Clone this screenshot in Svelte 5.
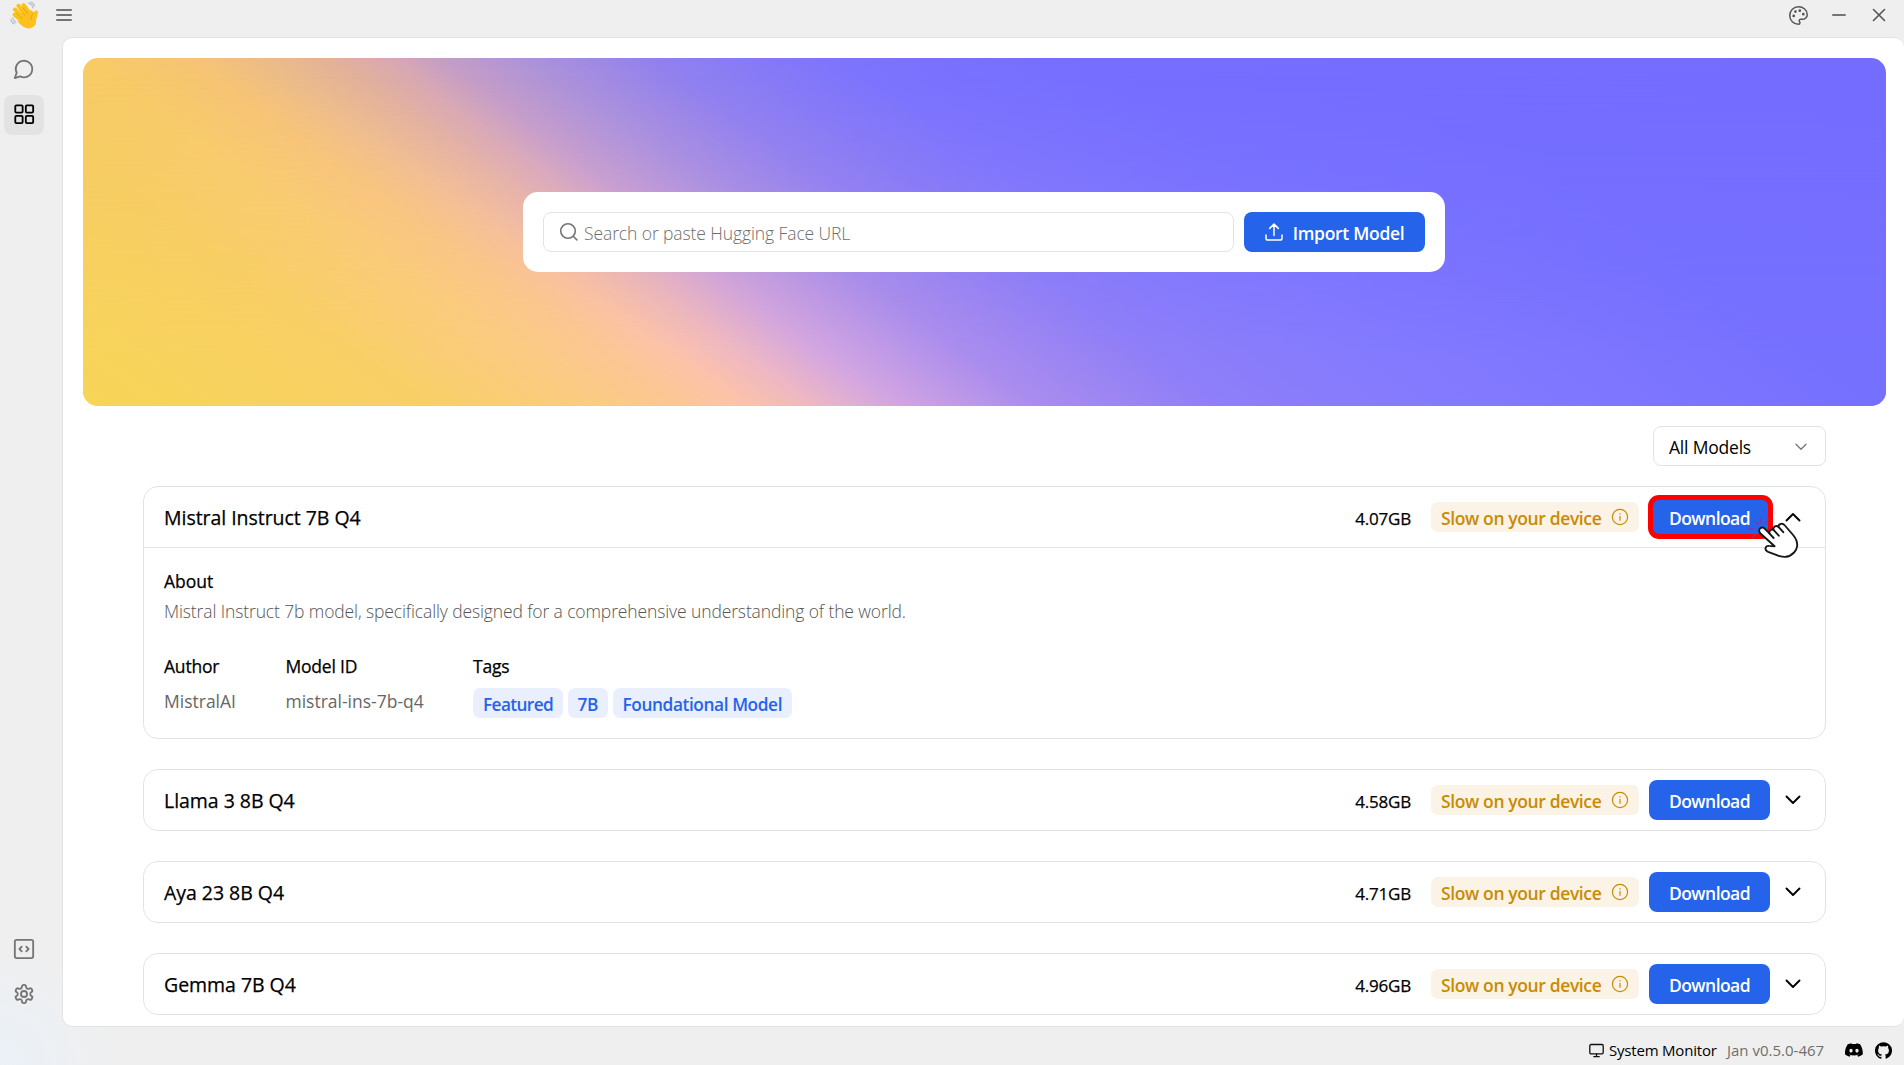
<script>
  const models = [
    { name: 'Mistral Instruct 7B Q4', size: '4.07GB', open: true },
    { name: 'Llama 3 8B Q4', size: '4.58GB' },
    { name: 'Aya 23 8B Q4', size: '4.71GB' },
    { name: 'Gemma 7B Q4', size: '4.96GB' }
  ];
  const tags = ['Featured', '7B', 'Foundational Model'];
</script>

<div class="app">
  <header class="titlebar">
    <svg class="logo" viewBox="0 0 28 28">
      <g fill="none" stroke="#b4c0cc" stroke-width="1.3" stroke-linecap="round">
        <path d="M18.5 2.2q3.800.6 4.500 4.600M20.800 1q3.200 1 3.600 3.800M1 18.500q.5 3.500 3.300 4.200M2.800 17q.5 3 3 4.200" />
      </g>
      <g stroke="#fcc21b" stroke-width="4" stroke-linecap="round">
        <path d="M4.500 13.500L14 22M5 8.500L16 19M8.500 4.800L18 15M13.500 4L20 13M26 11.500L24 19" />
      </g>
      <path fill="#fcc21b" d="M12 12l9-3 3.500 3 1.500 3v6c0 5-6 7.500-10 6-3-1-6-4-8-6z" />
      <path d="M6.500 12.500l5.500 5M9.500 8.500l5.500 6M13 6.500l5 6.500M23.200 12.500q-3 2.500-2.200 6" fill="none" stroke="#e59a12" stroke-width=".8" stroke-linecap="round" />
    </svg>
    <svg class="burger" viewBox="0 0 16 14" stroke="#757575" stroke-width="2" stroke-linecap="round"><path d="M1 2h14M1 7h14M1 12h14" /></svg>
    <span class="grow"></span>
    <svg class="palette line" viewBox="0 0 24 24">
      <circle cx="13.500" cy="6.500" r=".7" fill="currentColor" /><circle cx="17.500" cy="10.500" r=".7" fill="currentColor" />
      <circle cx="8.500" cy="7.500" r=".7" fill="currentColor" /><circle cx="6.500" cy="12.500" r=".7" fill="currentColor" />
      <path d="M12 2C6.500 2 2 6.500 2 12s4.500 10 10 10c.926 0 1.648-.746 1.648-1.688 0-.437-.18-.835-.437-1.125-.29-.289-.438-.652-.438-1.125a1.640 1.640 0 0 1 1.668-1.668h1.996c3.051 0 5.555-2.503 5.555-5.554C21.965 6.012 17.461 2 12 2z" />
    </svg>
    <svg class="min" viewBox="0 0 14 14" stroke="#757575" stroke-width="2" stroke-linecap="round"><path d="M1 7h12" /></svg>
    <svg class="close" viewBox="0 0 14 14" stroke="#555" stroke-width="1.600" stroke-linecap="round"><path d="M1.500 1.500l11 11M12.500 1.500l-11 11" /></svg>
  </header>

  <div class="body">
    <nav class="side">
      <span class="tile"><svg class="line" viewBox="0 0 24 24"><path d="M7.900 20A9 9 0 1 0 4 16.100L2 22Z" /></svg></span>
      <span class="tile active"><svg class="line" viewBox="0 0 24 24"><rect x="2.500" y="2.500" width="8" height="8" rx="1.200" /><rect x="14" y="2.500" width="8" height="8" rx="1.200" /><rect x="2.500" y="14" width="8" height="8" rx="1.200" /><rect x="14" y="14" width="8" height="8" rx="1.200" /></svg></span>
      <span class="grow"></span>
      <span class="tile low"><svg class="line" viewBox="0 0 24 24"><rect x="2" y="2" width="20" height="20" rx="2" /><path d="M9.500 9.500L7 12l2.500 2.500M14.500 9.500L17 12l-2.500 2.500" /></svg></span>
      <span class="tile low"><svg class="line" viewBox="0 0 24 24"><path d="M12.220 2h-.44a2 2 0 0 0-2 2v.18a2 2 0 0 1-1 1.730l-.43.25a2 2 0 0 1-2 0l-.15-.08a2 2 0 0 0-2.730.73l-.22.38a2 2 0 0 0 .73 2.730l.15.1a2 2 0 0 1 1 1.720v.51a2 2 0 0 1-1 1.740l-.15.09a2 2 0 0 0-.73 2.730l.22.38a2 2 0 0 0 2.730.73l.15-.08a2 2 0 0 1 2 0l.43.25a2 2 0 0 1 1 1.730V20a2 2 0 0 0 2 2h.44a2 2 0 0 0 2-2v-.18a2 2 0 0 1 1-1.730l.43-.25a2 2 0 0 1 2 0l.15.08a2 2 0 0 0 2.730-.73l.22-.39a2 2 0 0 0-.73-2.730l-.15-.08a2 2 0 0 1-1-1.740v-.5a2 2 0 0 1 1-1.740l.15-.09a2 2 0 0 0 .73-2.730l-.22-.38a2 2 0 0 0-2.730-.73l-.15.08a2 2 0 0 1-2 0l-.43-.25a2 2 0 0 1-1-1.730V4a2 2 0 0 0-2-2z" /><circle cx="12" cy="12" r="3.300" /></svg></span>
    </nav>

    <main class="panel">
      <section class="hero">
        <svg class="wash" viewBox="0 0 1803 348" preserveAspectRatio="none">
          <defs>
            <linearGradient id="top" gradientUnits="userSpaceOnUse" x1="-480" y1="0" x2="1803" y2="0" gradientTransform="skewX(54.1)">
              <stop offset="0" stop-color="#f7d35a" /><stop offset=".13" stop-color="#f5cc60" />
              <stop offset=".21" stop-color="#f8cb66" /><stop offset=".2576" stop-color="#f6c474" />
              <stop offset=".29" stop-color="#ebbb8a" /><stop offset=".319" stop-color="#e2b19a" />
              <stop offset=".344" stop-color="#d8a8b2" /><stop offset=".3666" stop-color="#c59dc6" />
              <stop offset=".4056" stop-color="#ac92da" /><stop offset=".4617" stop-color="#9080f0" />
              <stop offset=".545" stop-color="#7c73fe" /><stop offset=".648" stop-color="#756eff" />
              <stop offset="1" stop-color="#746cff" />
            </linearGradient>
            <linearGradient id="bottom" gradientUnits="userSpaceOnUse" x1="-480" y1="0" x2="1803" y2="0" gradientTransform="skewX(54.1)">
              <stop offset="0" stop-color="#f7d556" /><stop offset=".15" stop-color="#f8cf66" />
              <stop offset=".223" stop-color="#fbcb82" /><stop offset=".263" stop-color="#fcc694" />
              <stop offset=".288" stop-color="#fdc3a8" /><stop offset=".321" stop-color="#edb7c4" />
              <stop offset=".357" stop-color="#d2a5e2" /><stop offset=".419" stop-color="#a98cee" />
              <stop offset=".5" stop-color="#8e7ef8" /><stop offset=".604" stop-color="#837aff" />
              <stop offset=".79" stop-color="#7670ff" />
            </linearGradient>
            <linearGradient id="fade" x1="0" y1="0" x2="0" y2="1"><stop offset="0.05" stop-color="#000" /><stop offset=".85" stop-color="#fff" /></linearGradient>
            <mask id="lower"><rect width="1803" height="348" fill="url(#fade)" /></mask>
          </defs>
          <rect width="1803" height="348" fill="url(#top)" />
          <rect width="1803" height="348" fill="url(#bottom)" mask="url(#lower)" />
        </svg>
        <div class="finder">
          <div class="field">
            <svg viewBox="0 0 20 20" fill="none" stroke="#757575" stroke-width="1.600" stroke-linecap="round"><circle cx="9" cy="9" r="7.300" /><path d="M14.500 14.500l3.400 3.400" /></svg>
            <span class="hint">Search or paste Hugging Face URL</span>
          </div>
          <button class="primary import">
            <svg viewBox="0 0 18 18" fill="none" stroke="#fff" stroke-width="1.500" stroke-linecap="round" stroke-linejoin="round"><path d="M9 12.500V1.200M4.700 5.400L9 1.100l4.300 4.300M1 12v3.200q0 1.800 1.800 1.800h12.400q1.800 0 1.800-1.800V12" /></svg>
            <span>Import Model</span>
          </button>
        </div>
      </section>

      <div class="filter">
        <div class="select">
          <span>All Models</span>
          <svg viewBox="0 0 12 8" fill="none" stroke="#757575" stroke-width="1.300" stroke-linecap="round" stroke-linejoin="round"><path d="M1 1.300l5 5 5-5" /></svg>
        </div>
      </div>

      <div class="list">
        {#each models as m}
          <article class="card">
            <div class="row">
              <h2>{m.name}</h2>
              <span class="size">{m.size}</span>
              <span class="slow">
                <span class="slowtext">Slow on your device</span>
                <svg viewBox="0 0 18 18" fill="none" stroke="#ca8a04" stroke-width="1.200"><circle cx="9" cy="9" r="7.600" /><path d="M9 8v4.700" /><path d="M9 5.200v1.300" /></svg>
              </span>
              <button class="primary download">
                <span>Download</span>
                {#if m.open}
                  <i class="ring"></i>
                  <svg class="hand" viewBox="0 0 52 44">
                    <path d="M14 2v6M21.500 3l-3.500 5.500M1.500 13h6M8 5l3.500 3.500M5.500 21.500l4-4" fill="none" stroke="#93309b" stroke-width="1.400" />
                    <path d="M13 12.500c2-2 4.200-.5 5.600 1.200l4 4c-.8-3 1.200-4.700 3.700-4-.2-3.200 2.800-4.500 5-3 .5-3.300 4.300-4 6.600-1.200l8.200 9.500c7 8.500 3.500 15 1 17.500-6 6-11 4.500-16 3.200l-10-3.800c-4.500-2-2.500-6.500 1-6l5.500.3L13.500 17.500c-1.600-1.600-1.700-3.800-.5-5z" fill="#fff" stroke="#171717" stroke-width="1.900" stroke-linejoin="round" />
                    <path d="M22.600 17.700l4 4.300M26.300 13.700l5.500 6M31.300 10.700l5 5.500" fill="none" stroke="#171717" stroke-width="1.900" stroke-linecap="round" />
                  </svg>
                {/if}
              </button>
              <svg class="chev" class:up={m.open} viewBox="0 0 16 10" fill="none" stroke="#000" stroke-width="1.900" stroke-linecap="round" stroke-linejoin="round"><path d="M1.500 1.500L8 8l6.500-6.500" /></svg>
            </div>
            {#if m.open}
              <div class="details">
                <h3 class="about">About</h3>
                <p class="desc">Mistral Instruct 7b model, specifically designed for a comprehensive understanding of the world.</p>
                <div class="meta">
                  <div class="author"><h3>Author</h3><p>MistralAI</p></div>
                  <div class="ident"><h3>Model ID</h3><p>mistral-ins-7b-q4</p></div>
                  <div class="tagcol">
                    <h3>Tags</h3>
                    <div class="tags">{#each tags as t}<span class="tag">{t}</span>{/each}</div>
                  </div>
                </div>
              </div>
            {/if}
          </article>
        {/each}
      </div>
    </main>
  </div>

  <footer class="status">
    <svg class="monitor" viewBox="0 0 15 15" fill="none" stroke="#111" stroke-width="1.300" stroke-linecap="round"><rect x=".8" y="1.500" width="13.400" height="9.300" rx="1.200" /><path d="M7.500 11v2.500M4.800 13.700h5.400" /></svg>
    <span class="sys">System Monitor</span>
    <span class="ver">Jan v0.5.0-467</span>
    <svg class="discord" viewBox="0 0 24 18.500"><path d="M20.317 1.600A19.800 19.800 0 0 0 15.432.1a14 14 0 0 0-.7 1.300 18.300 18.300 0 0 0-5.480 0A13 13 0 0 0 8.550.1 19.700 19.700 0 0 0 3.660 1.600C.54 6.200-.32 10.800.1 15.290a19.900 19.900 0 0 0 6 3.030 14.500 14.500 0 0 0 1.230-2 12.900 12.900 0 0 1-1.870-.9l.37-.3a14.200 14.200 0 0 0 12.060 0l.37.3c-.6.350-1.220.65-1.870.9.360.7.770 1.370 1.230 2a19.800 19.800 0 0 0 6-3.030c.5-5.180-.84-9.680-3.550-13.660zM8.020 12.560c-1.180 0-2.160-1.090-2.160-2.420s.96-2.420 2.160-2.420 2.180 1.090 2.160 2.420c0 1.330-.95 2.420-2.160 2.420zm7.970 0c-1.180 0-2.160-1.090-2.160-2.420s.96-2.420 2.160-2.420 2.180 1.090 2.160 2.420c0 1.330-.95 2.420-2.160 2.420z" /></svg>
    <svg class="github" viewBox="0 0 24 24"><path d="M12 .3a12 12 0 0 0-3.790 23.400c.6.100.83-.26.83-.57v-2.240c-3.340.72-4.040-1.420-4.040-1.420-.55-1.390-1.330-1.760-1.330-1.760-1.090-.74.080-.73.080-.73 1.200.09 1.840 1.240 1.840 1.240 1.070 1.840 2.800 1.300 3.490 1 .1-.78.420-1.310.76-1.610-2.670-.3-5.470-1.330-5.470-5.930 0-1.310.47-2.380 1.240-3.220-.14-.3-.54-1.520.1-3.180 0 0 1-.32 3.300 1.230a11.500 11.500 0 0 1 6.020 0c2.280-1.550 3.290-1.230 3.290-1.230.64 1.660.24 2.880.12 3.180a4.650 4.650 0 0 1 1.230 3.220c0 4.610-2.810 5.630-5.480 5.920.42.360.81 1.100.81 2.220v3.290c0 .32.200.7.820.58A12 12 0 0 0 12 .3z" /></svg>
  </footer>
</div>

<style>
  :global(body) { background: #efefef; overflow: hidden; }
  * { box-sizing: border-box; }
  .app {
    width: 100vw; height: 100vh; display: flex; flex-direction: column;
    font-family: 'Open Sans', 'Noto Sans', sans-serif; font-size: 17.5px; color: #000;
    background: radial-gradient(circle at 0 100%, #ebf1f8 0, #efefef00 120px), #efefef;
  }
  svg { display: block; flex: none; }
  h2, h3, p { margin: 0; font-weight: 500; white-space: nowrap; }
  h2, h3, .size { -webkit-text-stroke: .25px currentColor; }
  .grow { flex: 1; }
  .line { color: #757575; fill: none; stroke: currentColor; stroke-width: 2; stroke-linecap: round; stroke-linejoin: round; }

  .titlebar { height: 37px; padding: 0 12px 7px 10px; display: flex; align-items: center; }
  .logo { width: 28px; height: 28px; }
  .burger { width: 16px; height: 14px; margin-left: 18px; }
  .palette { width: 21px; height: 21px; color: #555; stroke-width: 1.700; }
  .min { width: 14px; height: 14px; margin-left: 23px; }
  .close { width: 14px; height: 14px; margin: 0 6px 0 26px; }

  .body { height: 990px; display: flex; }
  .side { width: 62px; padding: 13px 0 13px 4px; display: flex; flex-direction: column; gap: 5px; }
  .tile { width: 40px; height: 40px; border-radius: 8px; display: grid; place-items: center; padding-bottom: 2px; }
  .low { padding-bottom: 0; }
  .tile svg { width: 22px; height: 22px; }
  .active { background: #e3e3e3; }
  .active svg { color: #000; }

  .panel { flex: 1; background: #fff; border: 1px solid #e3e3e3; border-right: 0; border-radius: 10px; padding: 20px 18px 0 20px; overflow: hidden; }
  .hero { height: 348px; border-radius: 15px; overflow: hidden; display: grid; place-items: center; grid-template: 100% / 100%; }
  .wash { grid-area: 1 / 1; width: 100%; height: 100%; }
  .finder { grid-area: 1 / 1; width: 922px; height: 80px; margin-right: 1px; padding: 20px; background: #fff; border-radius: 15px; display: flex; gap: 10px; position: relative; }
  .field { flex: 1; border: 1px solid #e3e3e3; border-radius: 8px; display: flex; align-items: center; padding-left: 15px; }
  .field svg { width: 20px; height: 20px; }
  .hint { margin: 2px 0 0 5px; font-weight: 300; color: #6e6e6e; letter-spacing: -.1px; }
  .primary { border: 0; border-radius: 8px; background: #2563eb; color: #fff; font: 600 17.500px 'Open Sans', sans-serif; height: 40px; padding: 0; display: flex; align-items: center; justify-content: center; }
  .primary span { padding-top: 2px; }
  .import { width: 181px; gap: 10px; letter-spacing: -.3px; }
  .import svg { width: 18px; height: 18px; }

  .filter { padding: 20px 60px 0; display: flex; justify-content: flex-end; }
  .select { width: 173px; height: 40px; border: 1px solid #e3e3e3; border-radius: 8px; display: flex; align-items: center; justify-content: space-between; padding: 0 18px 0 15px; letter-spacing: -.2px; }
  .select span { padding-top: 2px; }
  .select svg { width: 12px; height: 8px; margin-top: 2px; }

  .list { padding: 20px 60px 0; display: flex; flex-direction: column; gap: 30px; }
  .card { border: 1px solid #e3e3e3; border-radius: 15px; }
  .row { height: 60px; display: flex; align-items: center; padding: 0 24px 0 20px; }
  h2 { flex: 1; font-size: 19.500px; letter-spacing: -.04px; padding-top: 1px; }
  .size { font-weight: 500; font-size: 17px; letter-spacing: -.2px; padding-top: 2px; }
  .slow { width: 208px; height: 30px; margin: 0 10px 0 20px; padding: 0 10px; border-radius: 7px; background: #faf3e6; color: #ca8a04; font-weight: 600; display: flex; align-items: center; justify-content: space-between; white-space: nowrap; }
  .slowtext { letter-spacing: -.38px; padding-top: 2px; }
  .slow svg { width: 18px; height: 18px; }
  .download { width: 121px; position: relative; letter-spacing: -.55px; }
  .ring { position: absolute; left: -1px; top: -2px; width: 125px; height: 44px; border: 5px solid #f00; border-radius: 11px; }
  .hand { position: absolute; left: 98px; top: 19px; width: 52px; height: 44px; }
  .chev { width: 16px; height: 10px; margin-left: 15px; }
  .up { transform: rotate(180deg); }

  .details { border-top: 1px solid #e3e3e3; height: 191px; padding: 18px 20px 0; }
  h3, .meta p { font-size: 17.500px; line-height: 30px; letter-spacing: -.2px; }
  .about { letter-spacing: 0; }
  .desc { font-weight: 300; line-height: 30px; color: #555; letter-spacing: -.12px; }
  .meta { display: flex; padding-top: 25px; }
  .meta p { font-weight: 400; color: #666; margin-top: 5px; letter-spacing: 0; }
  .author { width: 121.500px; }
  .ident { width: 187.500px; }
  .tags { display: flex; gap: 5px; margin-top: 7px; }
  .tag { height: 30px; padding: 1px 10px 0; border-radius: 7px; background: #e9effd; color: #2563eb; font-weight: 600; font-size: 17.250px; line-height: 31px; letter-spacing: -.4px; }
  .tag:first-child { letter-spacing: -.62px; }
  .tag:nth-child(2) { padding: 1px 9.500px 0; }

  .status { flex: 1; display: flex; align-items: center; padding: 8px 12px 0 0; justify-content: flex-end; font-size: 15px; }
  .monitor { width: 15px; height: 15px; margin-right: 5px; }
  .sys { font-weight: 500; width: 107px; margin-right: 11px; white-space: nowrap; letter-spacing: -.2px; }
  .ver { color: #6e6e6e; width: 97px; margin-right: 21px; white-space: nowrap; letter-spacing: 0; }
  .discord { width: 18px; height: 14px; margin-right: 12px; }
  .github { width: 17px; height: 17px; }
</style>
